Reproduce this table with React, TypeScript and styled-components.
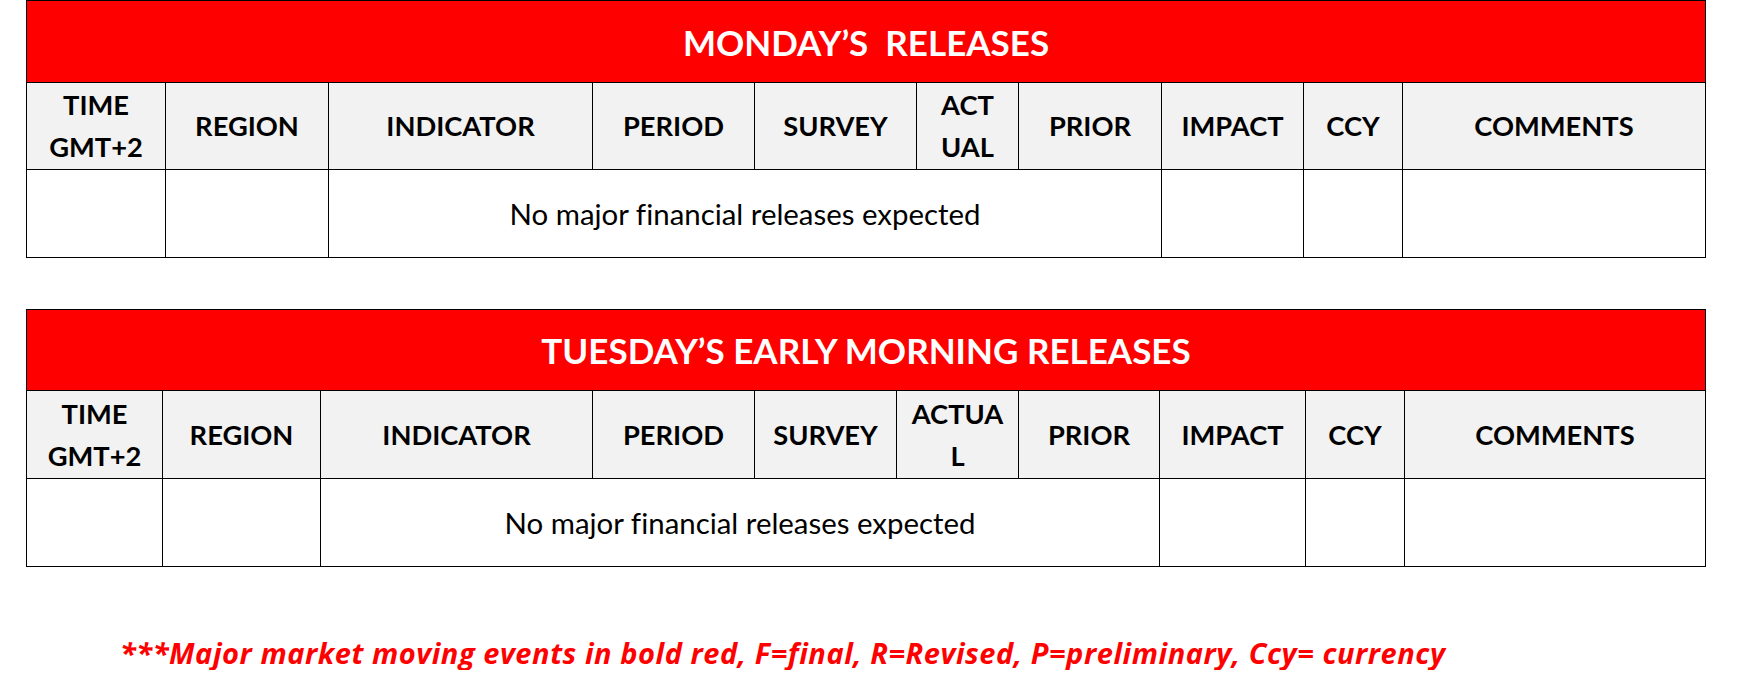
import React from "react";
import styled, { createGlobalStyle } from "styled-components";

const Global = createGlobalStyle`
  html, body { margin: 0; padding: 0; background: #ffffff; }
  body {
    font-family: Lato, "Liberation Sans", sans-serif;
    color: #000;
    font-variant-ligatures: none;
  }
`;

const Page = styled.div`
  display: flex;
  flex-direction: column;
  padding-left: 26px;
  width: 1680px;
`;

const Table = styled.section<{ $cols: string; $rows: string; $offset?: number }>`
  display: grid;
  grid-template-columns: ${(p) => p.$cols};
  grid-template-rows: ${(p) => p.$rows};
  gap: 1px;
  padding: 1px;
  background: #000;
  width: 1680px;
  box-sizing: border-box;
  margin-top: ${(p) => p.$offset ?? 0}px;
`;

const Title = styled.h2`
  grid-column: 1 / -1;
  margin: 0;
  background: #ff0000;
  color: #ffffff;
  font-family: Lato, "Liberation Sans", sans-serif;
  font-weight: 700;
  font-size: 35px;
  white-space: pre;
  display: flex;
  align-items: center;
  justify-content: center;
`;

const HeadCell = styled.div`
  background: #f2f2f2;
  font-weight: 700;
  font-size: 27.3px;
  line-height: 41.7px;
  text-align: center;
  display: flex;
  align-items: center;
  justify-content: center;
`;

const BodyCell = styled.div<{ $span?: string }>`
  background: #ffffff;
  grid-column: ${(p) => p.$span ?? "auto"};
  font-weight: 400;
  font-size: 29.4px;
  display: flex;
  align-items: center;
  justify-content: center;
`;

const Note = styled.p`
  margin: 68px 0 0 0;
  padding-left: 94px;
  color: #ff0000;
  font-family: "Open Sans", Lato, sans-serif;
  font-weight: 700;
  font-style: italic;
  font-size: 29px;
  line-height: 35px;
  letter-spacing: 0.55px;
  white-space: nowrap;
`;

type Day = {
  title: string;
  cols: string;
  rows: string;
  actual: [string, string];
  offset: number;
};

const days: Day[] = [
  {
    title: "MONDAY\u2019S  RELEASES",
    cols: "138px 162px 263px 161px 161px 101px 142px 141px 98px 302px",
    rows: "81px 86px 87px",
    actual: ["ACT", "UAL"],
    offset: 0,
  },
  {
    title: "TUESDAY\u2019S EARLY MORNING RELEASES",
    cols: "135px 157px 271px 161px 141px 121px 140px 145px 98px 300px",
    rows: "80px 87px 87px",
    actual: ["ACTUA", "L"],
    offset: 51,
  },
];

const Releases: React.FC<{ day: Day }> = ({ day }) => (
  <Table $cols={day.cols} $rows={day.rows} $offset={day.offset}>
    <Title>{day.title}</Title>
    <HeadCell>
      TIME
      <br />
      GMT+2
    </HeadCell>
    <HeadCell>REGION</HeadCell>
    <HeadCell>INDICATOR</HeadCell>
    <HeadCell>PERIOD</HeadCell>
    <HeadCell>SURVEY</HeadCell>
    <HeadCell>
      {day.actual[0]}
      <br />
      {day.actual[1]}
    </HeadCell>
    <HeadCell>PRIOR</HeadCell>
    <HeadCell>IMPACT</HeadCell>
    <HeadCell>CCY</HeadCell>
    <HeadCell>COMMENTS</HeadCell>
    <BodyCell />
    <BodyCell />
    <BodyCell $span="3 / 8">No major financial releases expected</BodyCell>
    <BodyCell />
    <BodyCell />
    <BodyCell />
  </Table>
);

export default function App() {
  return (
    <>
      <Global />
      <Page>
        {days.map((d) => (
          <Releases key={d.title} day={d} />
        ))}
        <Note>
          ***Major market moving events in bold red, F=final, R=Revised, P=preliminary, Ccy= currency
        </Note>
      </Page>
    </>
  );
}
